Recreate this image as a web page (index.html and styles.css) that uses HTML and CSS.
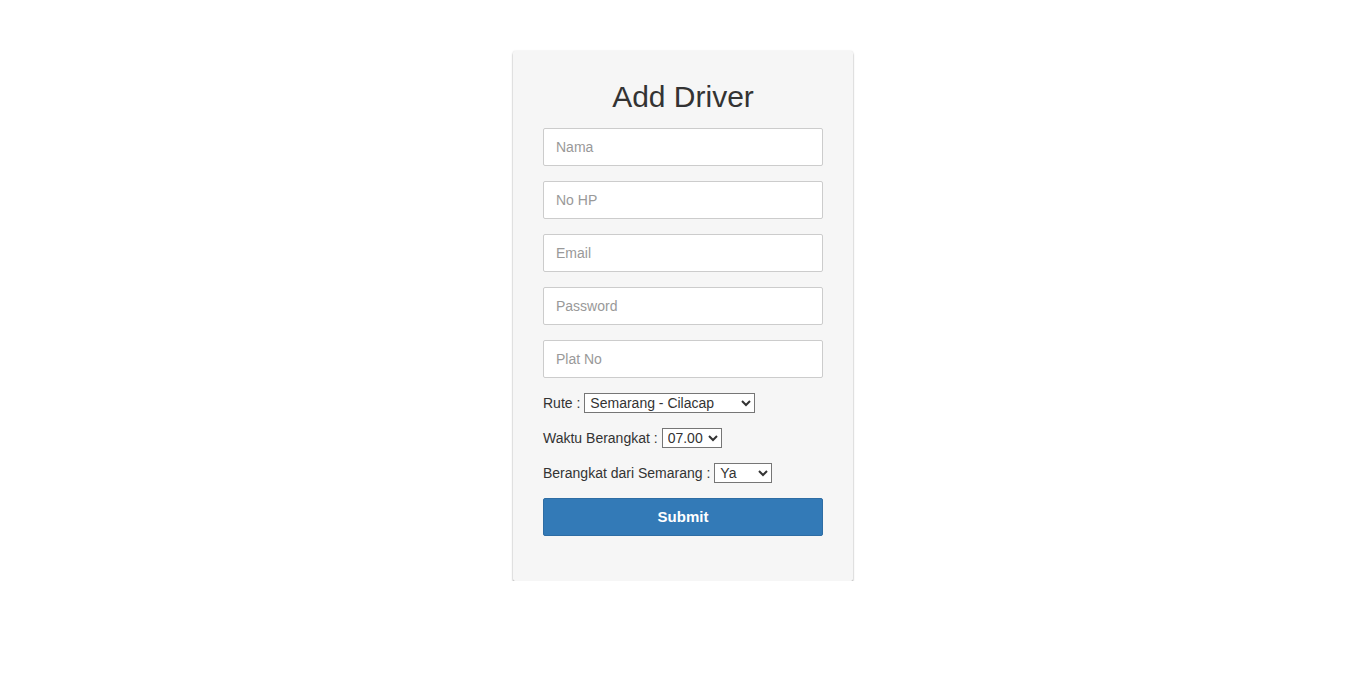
FILE: index.html
```html
<!DOCTYPE html>
<html lang="id">
<head>
    <meta charset="UTF-8">
    <meta name="viewport" content="width=device-width, initial-scale=1.0">
    <title>Add Driver</title>
    <link rel="stylesheet" href="styles.css">
</head>
<body>
    <div class="form-card">
        <h2>Add Driver</h2>
        <form class="driver-form">
            <input type="text" class="form-input" placeholder="Nama">
            <input type="text" class="form-input" placeholder="No HP">
            <input type="email" class="form-input" placeholder="Email">
            <input type="password" class="form-input" placeholder="Password">
            <input type="text" class="form-input" placeholder="Plat No">
            <div class="form-row">
                <label>Rute :</label>
                <select class="select-rute">
                    <option>Semarang - Cilacap</option>
                    <option>Semarang - Purwokerto</option>
                </select>
            </div>
            <div class="form-row">
                <label>Waktu Berangkat :</label>
                <select>
                    <option>07.00</option>
                    <option>10.00</option>
                    <option>13.00</option>
                    <option>16.00</option>
                </select>
            </div>
            <div class="form-row">
                <label>Berangkat dari Semarang :</label>
                <select class="select-ya">
                    <option>Ya</option>
                    <option>Tidak</option>
                </select>
            </div>
            <button type="submit">Submit</button>
        </form>
    </div>
</body>
</html>
```

FILE: styles.css
```css
body {
    margin: 0;
    font-family: "Liberation Sans", Arial, Helvetica, sans-serif;
    font-size: 14px;
    color: #333;
    background-color: #fff;
}
.form-card {
    width: 340px;
    box-sizing: border-box;
    margin: 51px auto 0;
    padding: 29px 30px 45px;
    background-color: #f6f6f6;
    border-radius: 2px;
    box-shadow: 0 0 2px rgba(0,0,0,0.12), 0 2px 2px rgba(0,0,0,0.35);
}
h2 {
    margin: 0 0 15px;
    font-size: 30px;
    font-weight: normal;
    line-height: 33px;
    text-align: center;
    color: #333;
}
.driver-form {
    display: flex;
    flex-direction: column;
    gap: 15px;
}
.form-input {
    height: 38px;
    box-sizing: border-box;
    padding: 0 12px;
    border: 1px solid #ccc;
    border-radius: 2px;
    background-color: #fff;
    font-family: inherit;
    font-size: 14px;
    color: #333;
}
.form-input::placeholder {
    color: #999;
}
.form-row {
    display: flex;
    align-items: center;
    height: 20px;
}
.form-row label {
    margin-right: 4px;
}
select {
    height: 20px;
    font-family: inherit;
    font-size: 14px;
    color: #333;
    border: 1px solid #767676;
    border-radius: 0;
    background-color: #fff;
    padding: 0 1px;
}
.select-rute {
    width: 171px;
}
.select-ya {
    width: 58px;
}
button {
    height: 38px;
    padding: 0 0 2px;
    border: 1px solid #2e6da4;
    border-radius: 2px;
    background-color: #337ab7;
    color: #fff;
    font-family: inherit;
    font-size: 15px;
    font-weight: bold;
    cursor: pointer;
}
```
